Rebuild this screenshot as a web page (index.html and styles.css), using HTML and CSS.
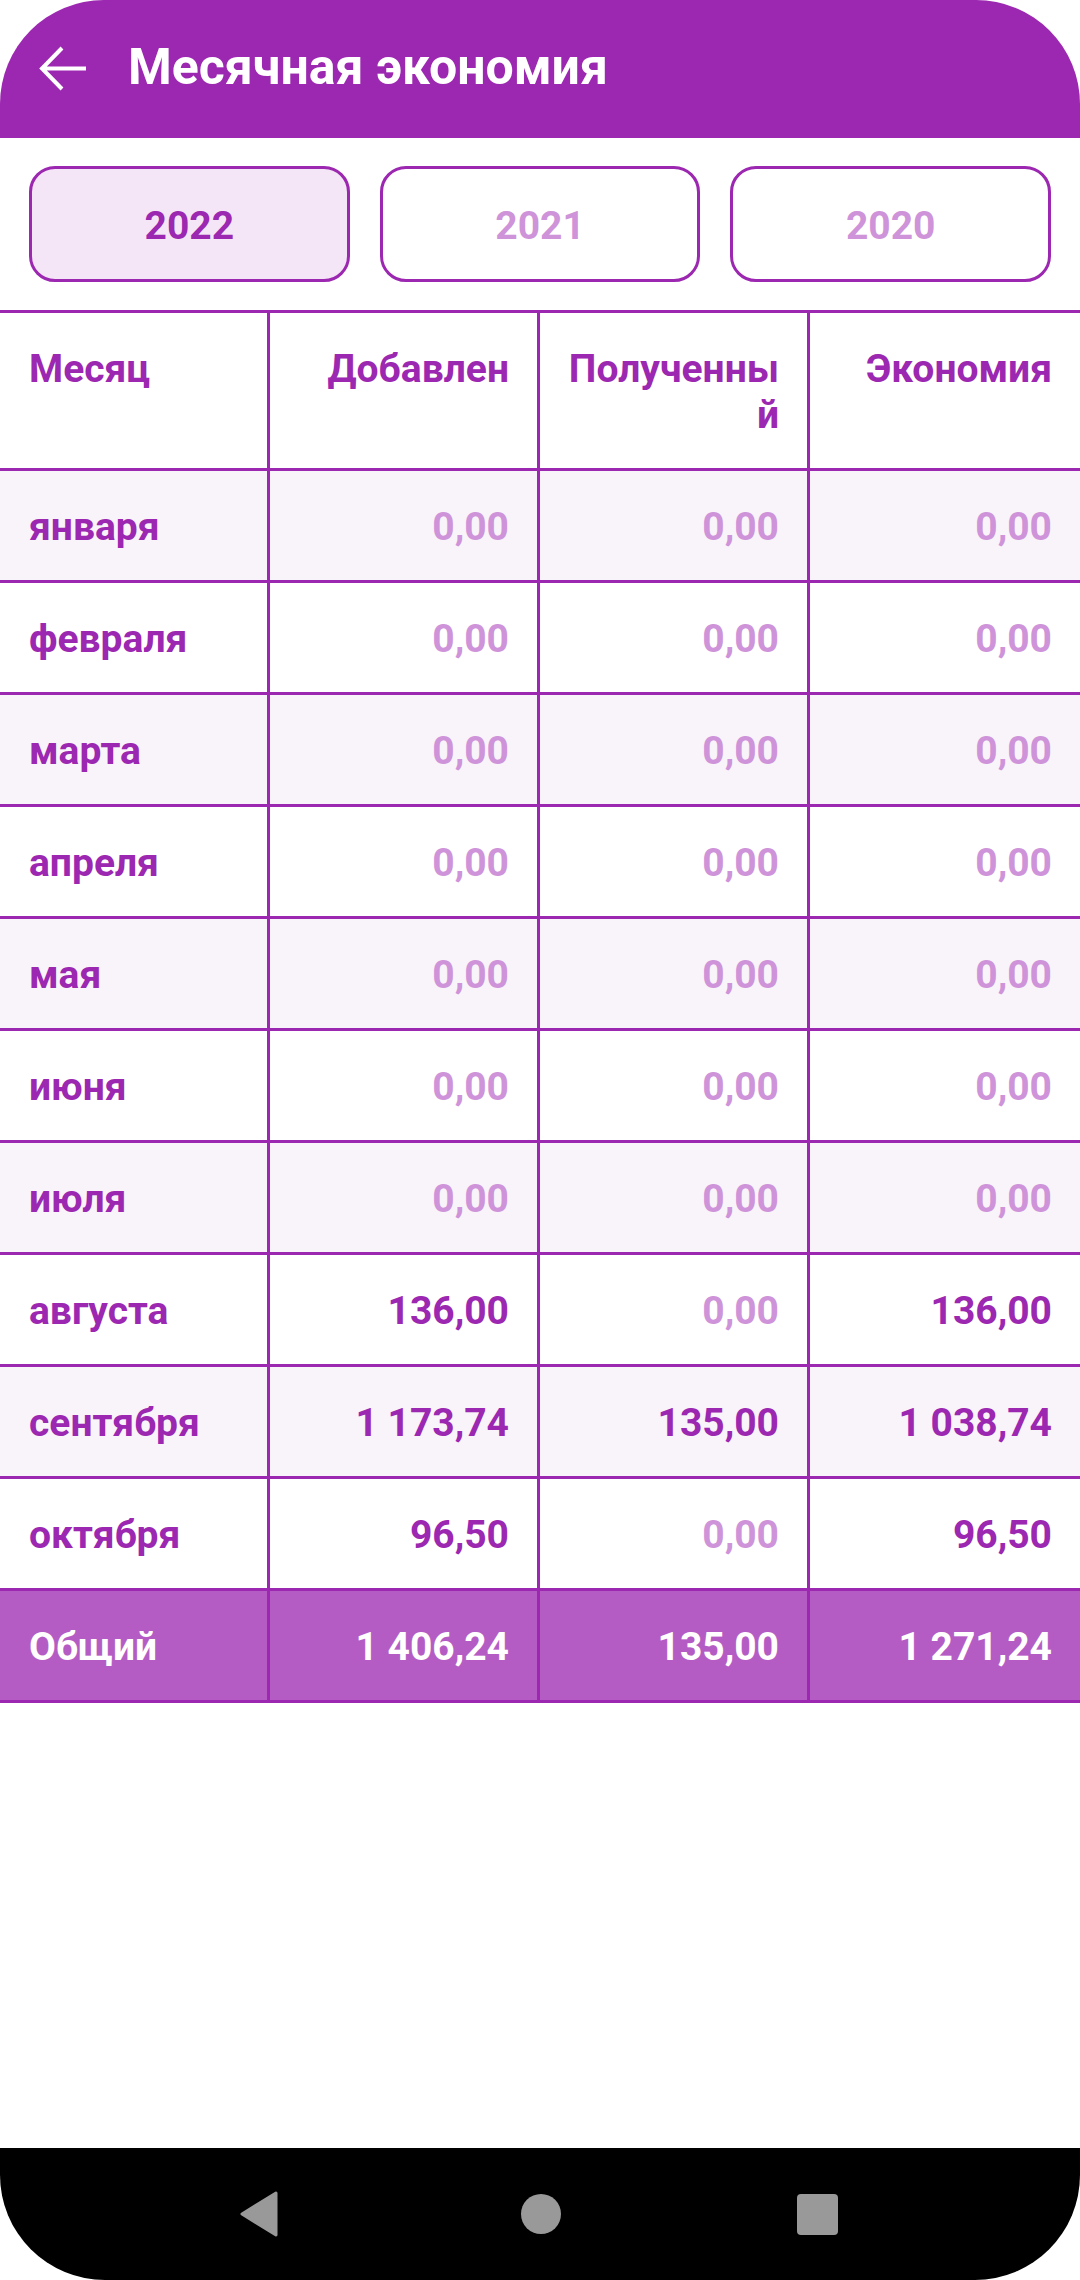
FILE: index.html
```html
<!DOCTYPE html>
<html lang="ru">
<head>
    <meta charset="UTF-8">
    <title>Месячная экономия</title>
    <link rel="stylesheet" href="styles.css">
</head>
<body>
<div id="screen">
    <div id="bar">
        <svg class="back" width="48" height="48" viewBox="0 0 48 48">
            <path d="M47 23.5H3M23 3L3 23.5L23 44" fill="none" stroke="#fff" stroke-width="4"/>
        </svg>
        <span id="title">Месячная экономия</span>
    </div>

    <div id="years">
        <button class="year on">2022</button>
        <button class="year">2021</button>
        <button class="year">2020</button>
    </div>

    <div id="grid">
        <div class="row head">
            <div class="cell">Месяц</div>
            <div class="cell num">Добавлен</div>
            <div class="cell num">Полученный</div>
            <div class="cell num">Экономия</div>
        </div>
        <div class="row alt">
            <div class="cell">января</div>
            <div class="cell num zero">0,00</div>
            <div class="cell num zero">0,00</div>
            <div class="cell num zero">0,00</div>
        </div>
        <div class="row">
            <div class="cell">февраля</div>
            <div class="cell num zero">0,00</div>
            <div class="cell num zero">0,00</div>
            <div class="cell num zero">0,00</div>
        </div>
        <div class="row alt">
            <div class="cell">марта</div>
            <div class="cell num zero">0,00</div>
            <div class="cell num zero">0,00</div>
            <div class="cell num zero">0,00</div>
        </div>
        <div class="row">
            <div class="cell">апреля</div>
            <div class="cell num zero">0,00</div>
            <div class="cell num zero">0,00</div>
            <div class="cell num zero">0,00</div>
        </div>
        <div class="row alt">
            <div class="cell">мая</div>
            <div class="cell num zero">0,00</div>
            <div class="cell num zero">0,00</div>
            <div class="cell num zero">0,00</div>
        </div>
        <div class="row">
            <div class="cell">июня</div>
            <div class="cell num zero">0,00</div>
            <div class="cell num zero">0,00</div>
            <div class="cell num zero">0,00</div>
        </div>
        <div class="row alt">
            <div class="cell">июля</div>
            <div class="cell num zero">0,00</div>
            <div class="cell num zero">0,00</div>
            <div class="cell num zero">0,00</div>
        </div>
        <div class="row">
            <div class="cell">августа</div>
            <div class="cell num">136,00</div>
            <div class="cell num zero">0,00</div>
            <div class="cell num">136,00</div>
        </div>
        <div class="row alt">
            <div class="cell">сентября</div>
            <div class="cell num">1 173,74</div>
            <div class="cell num">135,00</div>
            <div class="cell num">1 038,74</div>
        </div>
        <div class="row">
            <div class="cell">октября</div>
            <div class="cell num">96,50</div>
            <div class="cell num zero">0,00</div>
            <div class="cell num">96,50</div>
        </div>
        <div class="row total">
            <div class="cell">Общий</div>
            <div class="cell num">1 406,24</div>
            <div class="cell num">135,00</div>
            <div class="cell num">1 271,24</div>
        </div>
    </div>

    <div id="fill"></div>

    <div id="nav">
        <svg class="tri" width="38" height="46" viewBox="0 0 38 46"><path d="M36 2L2 23L36 44Z" fill="#999" stroke="#999" stroke-width="3" stroke-linejoin="round"/></svg>
        <div class="dot"></div>
        <div class="sq"></div>
    </div>
</div>
</body>
</html>
```

FILE: styles.css
```css
*{margin:0;padding:0;box-sizing:border-box;}
body{background:#fff;font-family:Roboto,"Noto Sans",sans-serif;}
#screen{width:1080px;height:2280px;display:flex;flex-direction:column;overflow:hidden;}

#bar{height:138px;flex:none;background:#9c27b0;border-radius:104px 104px 0 0;display:flex;align-items:center;padding:0 0 5px 39px;gap:41px;}
#bar .back{flex:none;margin-top:4px;}
#title{color:#fff;font-size:50px;font-weight:700;}

#years{display:flex;gap:30px;padding:0 29px;margin-top:28px;}
.year{flex:1;height:116px;border:3px solid #9c27b0;border-radius:26px;background:#fff;color:#ce93d8;font-family:Roboto,sans-serif;font-size:39px;font-weight:700;padding-top:3px;}
.year.on{background:#f4e6f6;color:#9c27b0;}

#grid{margin-top:28px;border-top:3px solid #9c27b0;}
.row{display:grid;grid-template-columns:repeat(4,1fr);border-bottom:3px solid #9c27b0;}
.row.alt{background:#f9f4fa;}
.row.total{background:#b55cc4;}
.cell{padding:33px 28px 30px 29px;line-height:46px;font-size:39px;font-weight:700;color:#9c27b0;border-right:3px solid #9c27b0;overflow-wrap:anywhere;}
.cell:last-child{border-right:none;}
.num{text-align:right;padding-left:20px;}
.zero{color:#ce93d8;}
.total .cell{color:#fff;}

#fill{flex:1;}

#nav{height:132px;flex:none;background:#000;border-radius:0 0 105px 105px;display:flex;align-items:center;padding-left:240px;}
.dot{width:40px;height:40px;border-radius:50%;background:#999;margin-left:243px;}
.sq{width:41px;height:41px;border-radius:4px;background:#999;margin-left:236px;}
```
